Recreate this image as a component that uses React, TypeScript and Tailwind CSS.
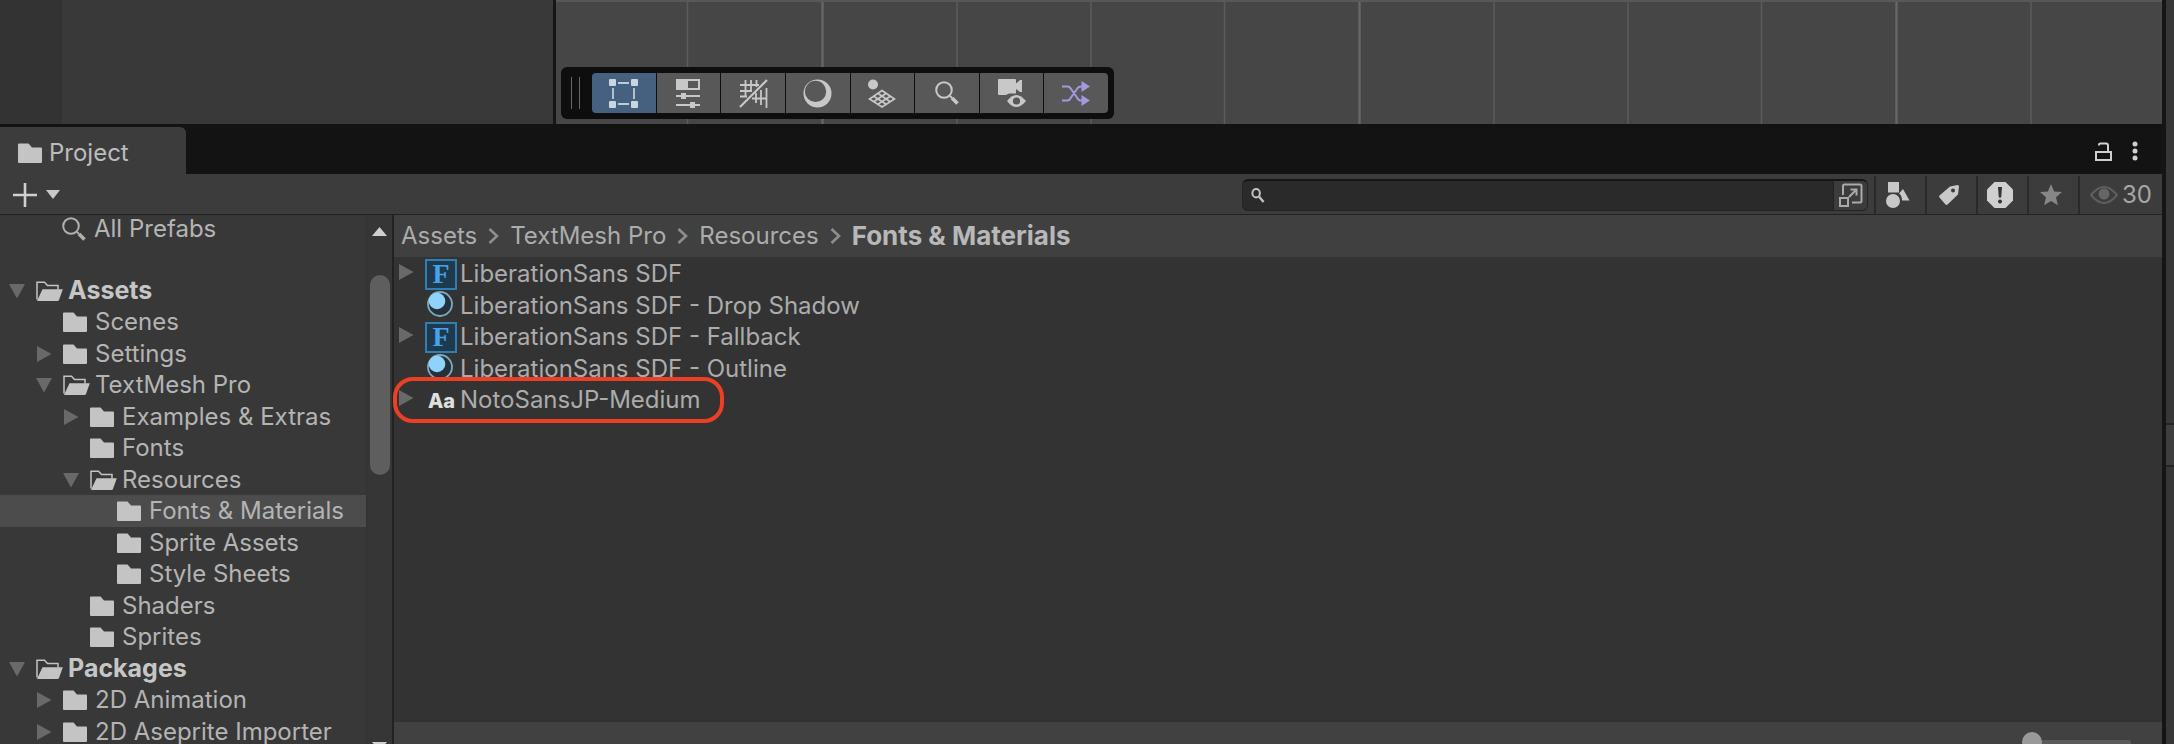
import type { ReactNode } from "react";

type TreeItem = {
  label: string;
  depth: number;
  icon: "folder" | "open";
  arrow?: "down" | "right";
  bold?: boolean;
  selected?: boolean;
};

const tree: TreeItem[] = [
  { label: "Assets", depth: 0, icon: "open", arrow: "down", bold: true },
  { label: "Scenes", depth: 1, icon: "folder" },
  { label: "Settings", depth: 1, icon: "folder", arrow: "right" },
  { label: "TextMesh Pro", depth: 1, icon: "open", arrow: "down" },
  { label: "Examples & Extras", depth: 2, icon: "folder", arrow: "right" },
  { label: "Fonts", depth: 2, icon: "folder" },
  { label: "Resources", depth: 2, icon: "open", arrow: "down" },
  { label: "Fonts & Materials", depth: 3, icon: "folder", selected: true },
  { label: "Sprite Assets", depth: 3, icon: "folder" },
  { label: "Style Sheets", depth: 3, icon: "folder" },
  { label: "Shaders", depth: 2, icon: "folder" },
  { label: "Sprites", depth: 2, icon: "folder" },
  { label: "Packages", depth: 0, icon: "open", arrow: "down", bold: true },
  { label: "2D Animation", depth: 1, icon: "folder", arrow: "right" },
  { label: "2D Aseprite Importer", depth: 1, icon: "folder", arrow: "right" },
];

const indents = ["pl-[9px]", "pl-[36px]", "pl-[63px]", "pl-[90px]"];

type FileItem = {
  label: string;
  kind: "font-asset" | "material" | "font";
  arrow?: boolean;
  marked?: boolean;
};

const files: FileItem[] = [
  { label: "LiberationSans SDF", kind: "font-asset", arrow: true },
  { label: "LiberationSans SDF - Drop Shadow", kind: "material" },
  { label: "LiberationSans SDF - Fallback", kind: "font-asset", arrow: true },
  { label: "LiberationSans SDF - Outline", kind: "material" },
  { label: "NotoSansJP-Medium", kind: "font", arrow: true, marked: true },
];

function Folder() {
  return (
    <svg width="24" height="20" viewBox="0 0 24 20" className="fill-[#c4c4c4]">
      <path d="M1 .5h9.5l3.5 4h9q1 0 1 1V19q0 1-1 1H1q-1 0-1-1V1.500q0-1 1-1z" />
    </svg>
  );
}

function OpenFolder() {
  return (
    <svg width="27" height="20" viewBox="0 0 27 20">
      <path d="M1 18.500V1.200h7.500l3 3.300h10.500v4" fill="none" stroke="#c4c4c4" strokeWidth="1.500" />
      <path d="M6.500 8.200h20.300L23 19q-.4 1-1.500 1H1z" fill="#c4c4c4" />
    </svg>
  );
}

function Arrow({ dir }: { dir: "down" | "right" }) {
  return (
    <svg width="16" height="16" viewBox="0 0 16 16" className="fill-[#696969]">
      {dir === "down" ? <path d="M0 1h16L8 15.500z" /> : <path d="M1 0l14.500 8L1 16z" />}
    </svg>
  );
}

function Magnifier({ size, color }: { size: number; color: string }) {
  return (
    <svg width={size} height={size} viewBox="0 0 24 24" fill="none" stroke={color}>
      <circle cx="9" cy="9" r="7.800" strokeWidth="2" />
      <path d="M15 15l2 2" strokeWidth="2" />
      <path d="M17 17l5.500 5.500" strokeWidth="3.600" />
    </svg>
  );
}

const lines = { fill: "none", stroke: "#c8c8c8", strokeWidth: 2 } as const;

const tools: { name: string; icon: ReactNode }[] = [
  {
    name: "Rect tool",
    icon: (
      <svg width="29" height="29" viewBox="0 0 29 29">
        <path d="M9 4h11M9 25h11M4 9v11M25 9v11" fill="none" stroke="#bccbdc" strokeWidth="1.800" />
        <g fill="#c9d5e2">
          <rect width="7" height="7" rx="1" />
          <rect x="22" width="7" height="7" rx="1" />
          <rect y="22" width="7" height="7" rx="1" />
          <rect x="22" y="22" width="7" height="7" rx="1" />
        </g>
      </svg>
    ),
  },
  {
    name: "View options",
    icon: (
      <svg width="24" height="29" viewBox="0 0 24 29">
        <rect x="1" y="1" width="22" height="9" {...lines} />
        <path d="M0 1h12v9H0zM5 14h5v6H5zM14 23h5v6h-5z" fill="#c8c8c8" />
        <path d="M0 17h24M0 26h24" {...lines} />
      </svg>
    ),
  },
  {
    name: "Grid snapping",
    icon: (
      <svg width="29" height="29" viewBox="0 0 29 29">
        <g {...lines} strokeWidth="1.800">
          <path d="M1 28L28 1" strokeWidth="2.200" />
          <path d="M6.500 1v17M12 1v12M17.500 1v7M1 6h19M1 12h12M1 17.500h7" />
          <path d="M17 14v10M22 11v15M27.500 9v20M13 19.500h15" />
        </g>
      </svg>
    ),
  },
  {
    name: "Shading mode",
    icon: (
      <svg width="29" height="29" viewBox="0 0 29 29">
        <circle cx="14.500" cy="14.500" r="14" fill="#c8c8c8" />
        <circle cx="12.600" cy="12.400" r="10.600" fill="#585858" />
      </svg>
    ),
  },
  {
    name: "Lighting",
    icon: (
      <svg width="28" height="29" viewBox="0 0 28 29">
        <circle cx="5" cy="5.500" r="5" fill="#c8c8c8" />
        <path
          d="M14 11.500L26.500 20 14 28 1.500 20zM9.800 14.300L22.300 22.700M5.700 17.200L18.200 25.300M18.200 14.300L5.700 22.700M22.300 17.200L9.800 25.300"
          {...lines}
          strokeWidth="1.700"
        />
      </svg>
    ),
  },
  { name: "Search scene", icon: <Magnifier size={24} color="#c8c8c8" /> },
  {
    name: "Camera visibility",
    icon: (
      <svg width="28" height="29" viewBox="0 0 28 29">
        <path d="M1 0h16q1 0 1 1v3.500l4-3.500h2v12h-2l-4-3v4.500H11L8 16H1q-1 0-1-1V1q0-1 1-1z" fill="#c8c8c8" />
        <path d="M9 22q9-12 19 0-10 12-19 0z" fill="#c8c8c8" />
        <circle cx="18.500" cy="22" r="3.600" fill="#585858" />
      </svg>
    ),
  },
  {
    name: "Effects",
    icon: (
      <svg width="28" height="25" viewBox="0 0 28 25">
        <path
          d="M0 5.500h5.500q2 0 3.200 2l6.600 9.500q1.200 2.500 3.700 2.500h3M0 19.500h5.500q2 0 3.200-2.500l6.600-9.500q1.200-2 3.700-2h3"
          fill="none"
          stroke="#a598dd"
          strokeWidth="2"
        />
        <path d="M19.500 0l8.500 5.500-8.500 5.500zM19.500 14l8.500 5.500-8.500 5.500z" fill="#a598dd" />
      </svg>
    ),
  },
];

function SceneToolbar() {
  return (
    <div className="absolute top-[67px] left-[5px] flex h-13 items-center rounded-md bg-[#0e0e0e] py-[6px] pr-[6px] pl-[10px]">
      <div className="mr-3 flex h-8 w-[9px] justify-between">
        <span className="w-px bg-[#666666]" />
        <span className="w-px bg-[#666666]" />
      </div>
      <div className="flex h-10 w-[516px] gap-px overflow-hidden rounded">
        {tools.map((tool, i) => (
          <button
            key={tool.name}
            aria-label={tool.name}
            className={`flex flex-1 items-center justify-center ${i === 0 ? "bg-[#46607f]" : "bg-[#585858]"}`}
          >
            {tool.icon}
          </button>
        ))}
      </div>
    </div>
  );
}

function SceneView() {
  return (
    <section className="flex h-31">
      <div className="w-[62px] bg-[#333333]" />
      <div className="w-[491px] bg-[#393939]" />
      <div className="w-[3px] bg-[#161616]" />
      <div className="relative min-w-0 flex-1 bg-[#464646]">
        <svg className="block h-full w-full">
          <defs>
            <pattern id="grid" x="130" width="537" height="124" patternUnits="userSpaceOnUse">
              <path d="M1.500 0v124M271 0v124M405 0v124" stroke="#5c5c5c" strokeWidth="1.400" />
              <path d="M136.500 0v124" stroke="#666666" strokeWidth="2.400" />
            </pattern>
          </defs>
          <rect width="100%" height="124" fill="url(#grid)" />
          <rect width="100%" height="2" fill="#585858" />
        </svg>
        <SceneToolbar />
      </div>
    </section>
  );
}

function TabBar() {
  return (
    <header className="flex h-[50px] items-end justify-between bg-[#131313]">
      <button className="flex h-[47px] w-[186px] items-center gap-[7px] rounded-tr-md bg-[#3c3c3c] pt-1 pl-[18px] text-[#bcbcbc]">
        <Folder />
        Project
      </button>
      <div className="flex h-[50px] items-center gap-4 pt-1 pr-5">
        <button aria-label="Unlock">
          <svg width="17" height="19" viewBox="0 0 17 19" fill="none" stroke="#cfcfcf" strokeWidth="2">
            <rect x="1" y="10" width="15" height="8" />
            <path d="M4 3.500V2.500q0-1 1.500-1H11q2 0 2 2V10" />
          </svg>
        </button>
        <button aria-label="More" className="px-1">
          <svg width="6" height="20" viewBox="0 0 6 20" fill="#d0d0d0">
            <circle cx="3" cy="3" r="2.500" />
            <circle cx="3" cy="10" r="2.500" />
            <circle cx="3" cy="17" r="2.500" />
          </svg>
        </button>
      </div>
    </header>
  );
}

const filterButton = "flex h-[38px] w-[51px] items-center justify-center border-l-2 border-[#2a2a2a] pr-[6px]";

function ProjectToolbar() {
  return (
    <div className="flex h-[41px] items-center border-b border-[#222222] bg-[#3c3c3c] pt-px">
      <button aria-label="Create" className="flex items-center gap-[9px] pl-[13px]">
        <svg width="24" height="24" viewBox="0 0 24 24" stroke="#d0d0d0" strokeWidth="2.600">
          <path d="M12 0v24M0 12h24" />
        </svg>
        <svg width="14" height="9" viewBox="0 0 14 9" fill="#cacaca">
          <path d="M0 0h14L7 9z" />
        </svg>
      </button>
      <div className="ml-auto flex h-8 w-[43%] max-w-[626px] min-w-0 overflow-hidden rounded-md border border-t-2 border-[#242424] border-t-[#161616] bg-[#2a2a2a]">
        <label htmlFor="search" className="flex items-center px-2">
          <svg width="14" height="15" viewBox="0 0 15 16" fill="none" stroke="#c0c0c0">
            <ellipse cx="5.500" cy="5.500" rx="4" ry="4.500" strokeWidth="2.200" />
            <path d="M8.500 9l5 6" strokeWidth="2.600" />
          </svg>
        </label>
        <input id="search" aria-label="Search assets" className="min-w-0 flex-1 bg-transparent text-[#c4c4c4] outline-none" />
        <button
          aria-label="Open in search window"
          className="flex w-[34px] items-center justify-center border-l border-[#222222] bg-[#3c3c3c]"
        >
          <svg width="24" height="24" viewBox="0 0 24 24" fill="none" stroke="#aaaaaa" strokeWidth="2">
            <path d="M4 12V3q0-1.500 1.500-1.500h15.500q1.500 0 1.500 1.500v15q0 1.500-1.500 1.500H13" />
            <rect x="1" y="15" width="8" height="8" />
            <path d="M10 14l7-7M11.500 6.500H17.500V12.500" />
          </svg>
        </button>
      </div>
      <div className="ml-[6px] flex">
        <button aria-label="Search by type" className={filterButton}>
          <svg width="24" height="26" viewBox="0 0 24 26" fill="#c8c8c8">
            <path d="M2 0h11v10.500H2zM17 7l6.500 11.500h-7.500q0-5-3-7z" />
            <circle cx="7" cy="19" r="7" />
          </svg>
        </button>
        <button aria-label="Search by label" className={filterButton}>
          <svg width="20" height="20" viewBox="0 0 20 20" fill="#c8c8c8">
            <path
              fillRule="evenodd"
              d="M11 1.500L18.500 0q1.500 0 1.500 1.500L19 9.500 8.500 19.500q-1 .8-2 0L.5 12.500q-.8-1 0-2zM14 3.500a2 2 0 100 4 2 2 0 000-4z"
            />
          </svg>
        </button>
        <button aria-label="Search by import log" className={filterButton}>
          <svg width="28" height="28" viewBox="0 0 28 28">
            <path d="M8.500 1h11L27 8.500v11L19.500 27h-11L1 19.500v-11z" fill="#cfcfcf" />
            <path d="M12 6h4l-.8 10.500h-2.400z" fill="#333333" />
            <circle cx="14" cy="20.500" r="2" fill="#333333" />
          </svg>
        </button>
        <button aria-label="Save search" className={filterButton}>
          <svg width="22" height="22" viewBox="0 0 22 22" fill="#868686">
            <path d="M11 0l3.100 7.500 7.900.6-6 5.200 1.900 7.900L11 17l-6.900 4.200L6 13.300 0 8.100l7.900-.6z" />
          </svg>
        </button>
        <button
          aria-label="Hidden packages: 30"
          className="flex h-[38px] w-[84px] items-center gap-1 border-l-2 border-[#2a2a2a] pl-[10px] text-[#a6a6a6]"
        >
          <svg width="28" height="18" viewBox="0 0 28 18">
            <path d="M1 9q13-16 26 0-13 16-26 0z" fill="none" stroke="#5e5e5e" strokeWidth="2" />
            <circle cx="14" cy="8" r="5.500" fill="#666666" />
          </svg>
          30
        </button>
      </div>
    </div>
  );
}

function Tree() {
  return (
    <aside className="flex w-[394px] shrink-0 overflow-hidden border-r-2 border-[#222222] bg-[#383838] text-[#b4b4b4]">
      <div className="w-[366px] shrink-0">
        <button className="flex h-7 w-full items-center gap-2 pl-[62px]">
          <Magnifier size={24} color="#b0b0b0" />
          All Prefabs
        </button>
        <ul className="pt-8">
          {tree.map((item, i) => (
            <li key={i} className="odd:h-[31px] even:h-8">
              <button
                className={`flex h-full w-full items-center whitespace-nowrap ${indents[item.depth]} ${item.selected ? "bg-[#4c4c4c]" : ""}`}
              >
                <span className="w-[27px] shrink-0">{item.arrow && <Arrow dir={item.arrow} />}</span>
                <span className="w-8 shrink-0">{item.icon === "open" ? <OpenFolder /> : <Folder />}</span>
                <span className={item.bold ? "text-[25px] font-bold text-[#c6c6c6]" : ""}>{item.label}</span>
              </button>
            </li>
          ))}
        </ul>
      </div>
      <div className="flex flex-1 flex-col items-center border-l border-[#323232] bg-[#363636] pt-3">
        <svg width="15" height="9" viewBox="0 0 15 9" className="shrink-0 fill-[#d0d0d0]">
          <path d="M0 9h15L7.500 0z" />
        </svg>
        <div className="mt-[39px] h-50 w-5 shrink-0 rounded-full bg-[#5e5e5e]" />
        <svg width="15" height="9" viewBox="0 0 15 9" className="mt-[267px] shrink-0 fill-[#d0d0d0]">
          <path d="M0 0h15L7.500 9z" />
        </svg>
      </div>
    </aside>
  );
}

function FileIcon({ kind }: { kind: FileItem["kind"] }) {
  if (kind === "font-asset") {
    return (
      <span className="flex h-[31px] w-8 items-center justify-center border-2 border-[#2f7fb5] bg-[#1f3a4d] font-['Liberation_Serif',serif] text-[28px] leading-none font-bold text-[#46a3ea]">
        F
      </span>
    );
  }
  if (kind === "material") {
    return (
      <svg width="26" height="26" viewBox="0 0 26 26" className="mb-[3px] ml-[2px]">
        <circle cx="13" cy="13" r="12" fill="#25313a" stroke="#7fa9bf" strokeWidth="1.800" />
        <circle cx="10" cy="10" r="8.300" fill="#8fd2fb" />
      </svg>
    );
  }
  return <span className="pl-px text-[20px] font-extrabold text-[#e0e0e0]">Aa</span>;
}

function Chevron() {
  return (
    <svg width="11" height="16" viewBox="0 0 11 16" fill="none" stroke="#8e8e8e" strokeWidth="2.600">
      <path d="M1.500 1L9 8l-7.500 7" />
    </svg>
  );
}

function Contents() {
  return (
    <main className="flex min-w-0 flex-1 flex-col bg-[#333333] text-[#acacac]">
      <nav className="flex h-[42px] shrink-0 items-center gap-[11px] bg-[#404040] pb-px pl-[7px] whitespace-nowrap">
        <a href="#assets">Assets</a>
        <Chevron />
        <a href="#textmesh-pro">TextMesh Pro</a>
        <Chevron />
        <a href="#resources">Resources</a>
        <Chevron />
        <a href="#fonts-materials" className="text-[26px] font-bold text-[#b8b8b8]">
          Fonts & Materials
        </a>
      </nav>
      <ul className="flex-1 pt-px">
        {files.map((file) => (
          <li key={file.label} className="relative odd:h-8 even:h-[31px]">
            <button className="flex h-full items-center pl-1 whitespace-nowrap">
              <span className="w-[27px] shrink-0 pb-1">{file.arrow && <Arrow dir="right" />}</span>
              <span className="mr-[3px] w-8 shrink-0">
                <FileIcon kind={file.kind} />
              </span>
              {file.label}
            </button>
            {file.marked && (
              <span className="pointer-events-none absolute -top-[7px] -left-px h-[46px] w-[331px] rounded-[20px] border-4 border-[#ea4025]" />
            )}
          </li>
        ))}
      </ul>
      <footer className="flex h-[22px] shrink-0 justify-end overflow-hidden bg-[#414141] pt-[10px] pr-[31px]">
        <input
          type="range"
          min={0}
          max={100}
          defaultValue={0}
          aria-label="Icon size"
          className="h-5 w-[109px] shrink-0 appearance-none bg-transparent [&::-webkit-slider-runnable-track]:h-[5px] [&::-webkit-slider-runnable-track]:rounded-full [&::-webkit-slider-runnable-track]:bg-[#5a5a5a] [&::-webkit-slider-thumb]:-mt-2 [&::-webkit-slider-thumb]:h-5 [&::-webkit-slider-thumb]:w-5 [&::-webkit-slider-thumb]:appearance-none [&::-webkit-slider-thumb]:rounded-full [&::-webkit-slider-thumb]:bg-[#999999]"
        />
      </footer>
    </main>
  );
}

export default function App() {
  return (
    <div className="flex h-screen overflow-hidden bg-[#383838] font-['Inter',sans-serif] text-2xl leading-none">
      <div className="flex min-w-0 flex-1 flex-col">
        <SceneView />
        <TabBar />
        <ProjectToolbar />
        <div className="flex min-h-0 flex-1">
          <Tree />
          <Contents />
        </div>
      </div>
      <div className="flex w-3 shrink-0 flex-col border-l-4 border-[#151515] bg-[#373737] pt-[423px]">
        <div className="h-11 border-y-2 border-[#242424] bg-[#3e3e3e]" />
      </div>
    </div>
  );
}
